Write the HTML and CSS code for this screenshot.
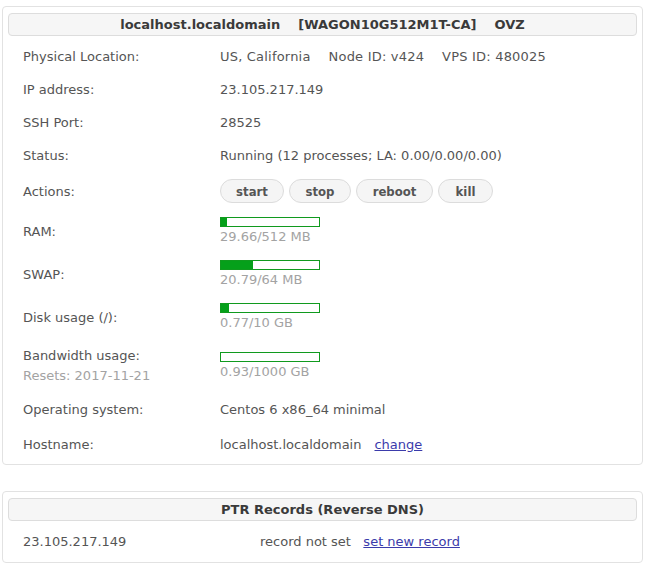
FILE: index.html
```html
<!DOCTYPE html>
<html>
<head>
<meta charset="utf-8">
<link rel="stylesheet" href="styles.css">
</head>
<body>
<div class="panel">
  <div class="panel-head">localhost.localdomain&nbsp;&nbsp;&nbsp;&nbsp;[WAGON10G512M1T-CA]&nbsp;&nbsp;&nbsp;&nbsp;OVZ</div>
  <table class="info">
    <tr class="r-text"><td class="lbl">Physical Location:</td><td class="val"><span class="seg">US, California</span><span class="seg">Node ID: v424</span><span class="seg">VPS ID: 480025</span></td></tr>
    <tr class="r-text"><td class="lbl">IP address:</td><td class="val">23.105.217.149</td></tr>
    <tr class="r-text"><td class="lbl">SSH Port:</td><td class="val">28525</td></tr>
    <tr class="r-text"><td class="lbl">Status:</td><td class="val">Running (12 processes; LA: 0.00/0.00/0.00)</td></tr>
    <tr class="r-actions"><td class="lbl">Actions:</td><td class="val"><div class="btns"><button class="btn b-start">start</button><button class="btn b-stop">stop</button><button class="btn b-reboot">reboot</button><button class="btn b-kill">kill</button></div></td></tr>
    <tr class="r-bar"><td class="lbl">RAM:</td><td class="val"><div class="bar"><div class="fill" style="width:6px"></div></div><div class="sub">29.66/512 MB</div></td></tr>
    <tr class="r-bar"><td class="lbl">SWAP:</td><td class="val"><div class="bar"><div class="fill" style="width:32px"></div></div><div class="sub">20.79/64 MB</div></td></tr>
    <tr class="r-bar"><td class="lbl">Disk usage (/):</td><td class="val"><div class="bar"><div class="fill" style="width:8px"></div></div><div class="sub">0.77/10 GB</div></td></tr>
    <tr class="r-bar"><td class="lbl"><div class="lbl-line">Bandwidth usage:</div><div class="lbl-line sub">Resets: 2017-11-21</div></td><td class="val"><div class="bar"><div class="fill" style="width:0px"></div></div><div class="sub">0.93/1000 GB</div></td></tr>
    <tr class="r-text"><td class="lbl">Operating system:</td><td class="val">Centos 6 x86_64 minimal</td></tr>
    <tr class="r-text r-last"><td class="lbl">Hostname:</td><td class="val">localhost.localdomain<a href="#" class="link host-link">change</a></td></tr>
  </table>
</div>
<div class="panel panel2">
  <div class="panel-head">PTR Records (Reverse DNS)</div>
  <div class="ptr-row">
    <span class="ptr-ip">23.105.217.149</span>
    <span class="ptr-state">record not set&nbsp;&nbsp;&nbsp;<a href="#" class="link">set new record</a></span>
  </div>
</div>
</body>
</html>
```

FILE: styles.css
```css
html, body {
  margin: 0;
  padding: 0;
  background: #ffffff;
}
body {
  padding: 6px 7px 0 2px;
  font-family: "DejaVu Sans", sans-serif;
  font-size: 13px;
  color: #555555;
}
.panel {
  border: 1px solid #e2e2e2;
  border-radius: 4px;
  padding: 6px 5px 2px 5px;
}
.panel2 {
  margin-top: 26px;
  padding-bottom: 1px;
}
.panel-head {
  background: #f6f6f6;
  border: 1px solid #dddddd;
  border-radius: 4px;
  height: 21px;
  line-height: 21px;
  text-align: center;
  font-weight: bold;
  font-size: 13px;
  color: #3a3a3a;
}
.info {
  border-collapse: collapse;
  margin-top: 4px;
  width: 100%;
}
.info td {
  padding: 7px 0;
  vertical-align: middle;
  line-height: 19px;
}
.info td.lbl {
  width: 197px;
  padding-left: 15px;
}
.info .r-last td {
  padding-top: 9px;
  padding-bottom: 8px;
}
.seg {
  margin-right: 18px;
  letter-spacing: 0.2px;
}
.lbl-line {
  line-height: 20px;
}
.val {
  color: #555555;
}
.sub {
  color: #a3a3a3;
}
.btns {
  display: flex;
  gap: 5px;
}
.btn {
  height: 24px;
  border: 1px solid #dcdcdc;
  border-radius: 12px;
  background: #f5f5f5;
  font-family: "DejaVu Sans", sans-serif;
  font-stretch: condensed;
  font-weight: bold;
  font-size: 13px;
  color: #555555;
  padding: 0;
}
.b-start { width: 64px; }
.b-stop { width: 62px; }
.b-reboot { width: 77px; }
.b-kill { width: 55px; }
.bar {
  width: 98px;
  height: 8px;
  border: 1px solid #109a1e;
  background: #ffffff;
}
.fill {
  height: 100%;
  background: #05a01a;
}
.link {
  color: #3b3bab;
  text-decoration: underline;
}
.host-link {
  margin-left: 13px;
}
.ptr-row {
  display: flex;
  align-items: center;
  height: 40px;
  padding-left: 15px;
  color: #555555;
}
.ptr-ip {
  width: 237px;
}
```
